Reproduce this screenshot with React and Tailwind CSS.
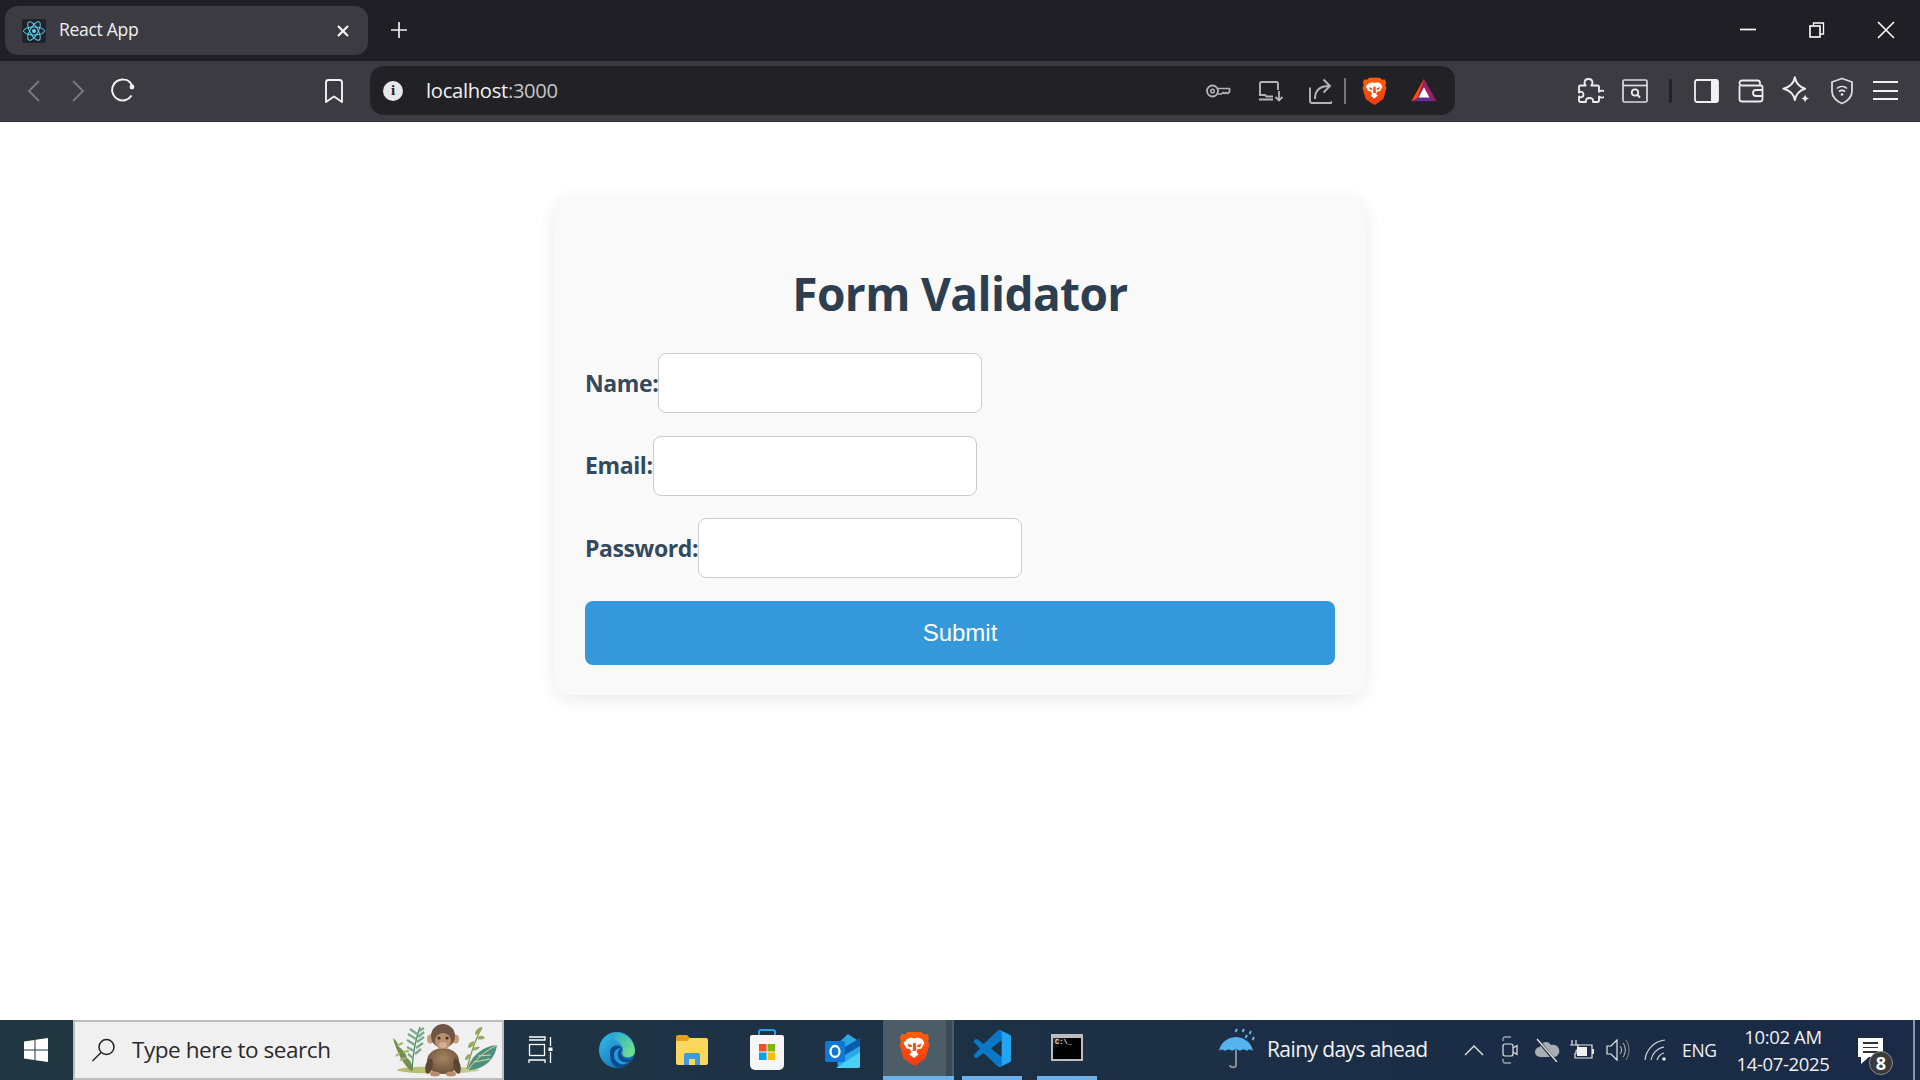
import React from "react";

const Ic = ({ w = 24, h = 24, vb, children, className = "" }) => (
  <svg width={w} height={h} viewBox={vb || `0 0 ${w} ${h}`} fill="none" className={"shrink-0 " + className}>
    {children}
  </svg>
);

const ReactLogo = () => (
  <div className="w-[24px] h-[24px] bg-[#20232a] rounded-[2px] flex items-center justify-center">
    <Ic w={22} h={22} vb="-11.5 -10.2 23 20.4">
      <circle r="2.05" fill="#61dafb" />
      <g stroke="#61dafb" strokeWidth="1">
        <ellipse rx="11" ry="4.2" />
        <ellipse rx="11" ry="4.2" transform="rotate(60)" />
        <ellipse rx="11" ry="4.2" transform="rotate(120)" />
      </g>
    </Ic>
  </div>
);

const BraveLion = ({ w = 31, h = 35, id = "bl" }) => (
  <Ic w={w} h={h} vb="0 0 31 35">
    <defs>
      <linearGradient id={id} x1="0" y1="0" x2="0" y2="1">
        <stop offset="0" stopColor="#ff5f0a" />
        <stop offset="1" stopColor="#f03a14" />
      </linearGradient>
    </defs>
    <path d="M9 1h13l3 2.500 3.500-.5 1.500 4-1 3.500 1.500 3-4 14-7 5-4 2.500-4-2.500-7-5-4-14 1.500-3-1-3.500 1.500-4 3.500.5z" fill={`url(#${id})`} />
    <path d="M8 8l4-1.500 3.500 1 3.500-1 4 1.500 2.500 4-3 5.500-3.500.5-1.500 3 2 2.500-4.500 3.500-4.500-3.500 2-2.500-1.500-3-3.500-.5-3-5.500z" fill="#fff" />
    <path d="M8.500 12.500l4 1.500.5 2h-3.200zM22.500 12.500l-4 1.500-.5 2h3.200zM14.200 12h2.600l.6 8h-3.800z" fill="#f9500f" />
  </Ic>
);

const Toolbar = () => (
  <div className="h-[61px] bg-[#3b3b41] border-b border-[#2f2f35] flex items-center shrink-0">
    <Ic w={20} h={26} className="ml-[24px] -mt-[1px]">
      <path d="M15 3L5 13l10 10" stroke="#77777c" strokeWidth="2" />
    </Ic>
    <Ic w={20} h={26} className="ml-[24px] -mt-[1px]">
      <path d="M5 3l10 10L5 23" stroke="#77777c" strokeWidth="2" />
    </Ic>
    <Ic w={26} h={28} className="ml-[22px] -mt-[2px]">
      <path d="M21.5 19.5A10.5 10.5 0 1 1 14 3.5c3.6 0 6 1.8 8 6" stroke="#f2f2f3" strokeWidth="2" />
      <circle cx="22" cy="11" r="2.4" fill="#f2f2f3" />
    </Ic>
    <Ic w={20} h={26} className="ml-[188px]">
      <path d="M2 4.500A2.500 2.500 0 0 1 4.500 2h11A2.500 2.500 0 0 1 18 4.500V24l-8-5.500L2 24z" stroke="#f2f2f3" strokeWidth="1.900" strokeLinejoin="round" />
    </Ic>
    <div className="ml-[26px] w-[1085px] h-[49px] -mt-[1px] shrink-0 rounded-[14px] bg-[#222226] flex items-center">
      <div className="ml-[13px] w-[20px] h-[20px] shrink-0 rounded-full bg-[#e8e8ea] flex items-center justify-center text-[#222226] text-[15px] font-bold leading-none font-['Liberation_Serif',serif]">i</div>
      <span className="ml-[23px] text-[20.200px] text-[#f0f0f2] font-['Open_Sans',sans-serif] tracking-[-0.3px] w-[130px] shrink-0">localhost<span className="text-[#c4c4c8]">:3000</span></span>
      <Ic w={26} h={20} className="ml-[649px]">
        <circle cx="7.500" cy="10" r="5.500" stroke="#b5b5b9" strokeWidth="1.800" />
        <circle cx="7.500" cy="10" r="1.800" stroke="#b5b5b9" strokeWidth="1.500" />
        <path d="M13 7.500h11.500v3.500l-2 1.500-1.500-1-1.500 1-1.500-1-1.500 1.500H13" stroke="#b5b5b9" strokeWidth="1.700" strokeLinejoin="round" />
      </Ic>
      <Ic w={26} h={22} className="ml-[26px]">
        <path d="M3 15V3.500A1.500 1.500 0 0 1 4.500 2h15A1.500 1.500 0 0 1 21 3.500V10M2 19.500h14M2 15h6l1.500 1.500H16" stroke="#b5b5b9" strokeWidth="1.900" />
        <path d="M22 11v9M18.500 17l3.500 3.500 3.500-3.500" stroke="#b5b5b9" strokeWidth="1.800" />
      </Ic>
      <Ic w={24} h={28} className="ml-[25px]">
        <path d="M2 10.500V24a2 2 0 0 0 2 2h18a2 2 0 0 0 2-2" stroke="#b5b5b9" strokeWidth="1.900" />
        <path d="M7 22c0-9 5-13 14-13M15.500 2.500L22 9l-6.500 6.500" stroke="#b5b5b9" strokeWidth="1.900" />
      </Ic>
      <div className="ml-[12px] w-[2px] h-[26px] bg-[#77777b]" />
      <div className="ml-[16px]"><BraveLion w={25} h={28} id="bl1" /></div>
      <Ic w={28} h={25} vb="0 0 32 30" className="ml-[23px]">
        <path d="M16 1L1 28l15-4 15 4z" fill="#9e1f63" />
        <path d="M16 1L1 28l7-3.500z" fill="#ff5000" />
        <path d="M1 28l15-8 15 8z" fill="#662d91" />
        <path d="M16 11l6.500 12.500h-13z" fill="#fff" />
      </Ic>
    </div>
    <Ic w={28} h={28} className="ml-[121px] -mt-[1px]">
      <path d="M5 8.500h5.200c-.8-1-1.200-1.900-1.200-3A3.900 3.900 0 0 1 13 2a3.900 3.900 0 0 1 4 3.500c0 1.100-.4 2-1.200 3H22a1.500 1.500 0 0 1 1.500 1.500v4.800c1-.8 1.900-1.200 3-1.200a3.500 3.500 0 0 1 0 7c-1.100 0-2-.4-3-1.200v4.100A1.500 1.500 0 0 1 22 25h-4.500c.5-3-1-4-3.500-4s-4 1-3.500 4H5a1.500 1.500 0 0 1-1.500-1.500v-4c2 1.500 4.500.5 4.500-2s-2.500-3.500-4.500-2V10A1.500 1.500 0 0 1 5 8.500z" stroke="#ececee" strokeWidth="1.900" strokeLinejoin="round" transform="translate(-.5 0)" />
    </Ic>
    <Ic w={26} h={24} className="ml-[18px] -mt-[1px]">
      <rect x="1" y="1" width="24" height="22" rx="1.500" stroke="#dcdcde" strokeWidth="1.700" />
      <path d="M1 6.500h24" stroke="#dcdcde" strokeWidth="1.700" />
      <circle cx="13" cy="13.500" r="3.200" stroke="#ececee" strokeWidth="1.800" />
      <path d="M15.500 16l2.500 2.500" stroke="#ececee" strokeWidth="2" />
    </Ic>
    <div className="ml-[21px] w-[3px] h-[24px] -mt-[1px] bg-[#222226] rounded-full" />
    <Ic w={25} h={24} className="ml-[22px] -mt-[1px]">
      <rect x="1" y="1" width="23" height="22" rx="2" stroke="#f1f1f3" strokeWidth="1.800" />
      <path d="M17 1h5a2 2 0 0 1 2 2v18a2 2 0 0 1-2 2h-5z" fill="#f1f1f3" />
    </Ic>
    <Ic w={26} h={24} className="ml-[19px] -mt-[1px]">
      <path d="M1.500 6.500V20A2.500 2.500 0 0 0 4 22.500h18a2.500 2.500 0 0 0 2.500-2.500V8A1.500 1.500 0 0 0 23 6.500H4A2.500 2.500 0 0 1 1.500 4 2.500 2.500 0 0 1 4 1.500h15.500A2.500 2.500 0 0 1 22 4v2.500" stroke="#ececee" strokeWidth="1.800" />
      <path d="M24.500 11H18a3 3 0 0 0 0 6h6.500" stroke="#ececee" strokeWidth="1.800" />
    </Ic>
    <Ic w={30} h={32} vb="0 0 26 28" className="ml-[17px] -mt-[1px]">
      <path d="M12 2c1 5.500 4 8.500 9 10-5 1.500-8 4.500-9 10-1-5.500-4-8.500-10-10 6-1.500 9-4.500 10-10z" stroke="#ececee" strokeWidth="1.700" strokeLinejoin="round" />
      <path d="M21 17c.4 2 1.500 3.100 3.500 3.500-2 .4-3.100 1.500-3.500 3.500-.4-2-1.500-3.100-3.500-3.500 2-.4 3.100-1.500 3.500-3.500z" fill="#ececee" />
    </Ic>
    <Ic w={24} h={28} className="ml-[19px] -mt-[1px]">
      <path d="M12 1.500l10 3.500v9.500c0 5.500-5 10-10 12-5-2-10-6.500-10-12V5z" stroke="#dcdcde" strokeWidth="1.800" strokeLinejoin="round" />
      <path d="M7 11.500c3-2.700 7-2.700 10 0M9 14.500c2-1.500 4-1.500 6 0" stroke="#ececee" strokeWidth="1.600" />
      <circle cx="12" cy="17.500" r="1.300" fill="#ececee" />
    </Ic>
    <div className="ml-[19px] -mt-[1px] w-[25px] flex flex-col gap-[6.500px]">
      <div className="h-[2px] bg-[#f1f1f3]" />
      <div className="h-[2px] bg-[#f1f1f3]" />
      <div className="h-[2px] bg-[#f1f1f3]" />
    </div>
  </div>
);

const Row = ({ label, w }) => (
  <div className="flex items-center h-[60px] mb-[22.5px]">
    <label className={"font-bold text-[23px] text-[#34495e] font-['Open_Sans',sans-serif] tracking-[-0.4px] whitespace-nowrap " + w}>{label}</label>
    <div className="w-[324px] h-[60px] bg-white border border-[#cccccc] rounded-[8px]" />
  </div>
);

const Monkey = () => (
  <Ic w={108} h={56} vb="0 2 108 56">
    <defs>
      <linearGradient id="gnd" x1="0" y1="0" x2="1" y2="0">
        <stop offset="0" stopColor="#b7b866" />
        <stop offset="1" stopColor="#c7cf96" />
      </linearGradient>
      <radialGradient id="fur" cx="0.5" cy="0.4" r="0.7">
        <stop offset="0" stopColor="#a58460" />
        <stop offset="1" stopColor="#634a38" />
      </radialGradient>
    </defs>
    <ellipse cx="46" cy="50" rx="41" ry="3.500" fill="url(#gnd)" />
    <path d="M20 50C21 32 24 18 28 7" stroke="#4f8a6c" strokeWidth="1.300" />
    <path d="M25 14l-7-5M27 11l5-3M24 19l-8-5M26 17l6-5M23 25l-8-5M25 22l7-5M22 31l-7-4M24 28l7-5M21 38l-5-4M23 34l6-5" stroke="#7cab8b" strokeWidth="2.300" />
    <path d="M1 18c3 2 5 5 5 8 4 3 8 7 9 12 3 2 5 5 6 12l-2 1C11 44 5 33 1 18z" fill="#738f4f" />
    <path d="M11 32l6-1M6 25l5-2M14 38l-6 2M8 33l-4 3" stroke="#a3b56b" strokeWidth="2" />
    <path d="M75 49C78 36 83 20 90 7" stroke="#7c9a50" strokeWidth="1.300" />
    <path d="M90 7c-5 1-7 4-7 8 4-1 7-3 7-8zM85 18c2 2 5 2 8 0-2-3-5-3-8 0zM82 21c-4 1-6 3-6 7 4 0 6-3 6-7zM80 30c3 1 6 0 8-3-4-1-6 0-8 3zM78 34c-3 0-5 3-5 6 3 0 5-2 5-6z" fill="#93a95c" />
    <path d="M76 50c1-12 14-24 29-25-2 15-14 25-29 25z" fill="#4f917f" />
    <path d="M76 50c7-10 17-19 29-25M82 42l16-3M86 36l13-1" stroke="#d9d7a8" strokeWidth="1" />
    <ellipse cx="51" cy="41" rx="16" ry="13" fill="url(#fur)" />
    <ellipse cx="37" cy="46" rx="3.500" ry="8" fill="#5f4634" transform="rotate(12 37 46)" />
    <ellipse cx="65" cy="46" rx="3.500" ry="8" fill="#5f4634" transform="rotate(-12 65 46)" />
    <ellipse cx="38.500" cy="19" rx="3.500" ry="4.500" fill="#c99a7c" />
    <ellipse cx="63.500" cy="19" rx="3.500" ry="4.500" fill="#c99a7c" />
    <ellipse cx="51" cy="16" rx="12" ry="12" fill="#6e5548" />
    <ellipse cx="51" cy="21" rx="8" ry="8" fill="#b88f6f" />
    <circle cx="47" cy="18" r="1.600" fill="#4a2f15" />
    <circle cx="55" cy="18" r="1.600" fill="#4a2f15" />
    <ellipse cx="51" cy="25" rx="4" ry="3" fill="#d8ae90" />
    <ellipse cx="43" cy="54" rx="5" ry="2.500" fill="#b98c70" />
    <ellipse cx="59" cy="54" rx="5" ry="2.500" fill="#b98c70" />
  </Ic>
);

const Edge = () => (
  <Ic w={38} h={38} vb="0 0 38 38">
    <defs>
      <linearGradient id="e1" x1="0" y1="0" x2="1" y2="1"><stop offset="0" stopColor="#35c1f1" /><stop offset="1" stopColor="#0c59a4" /></linearGradient>
      <linearGradient id="e2" x1="0" y1="0" x2="1" y2="0.6"><stop offset="0" stopColor="#1b9de2" /><stop offset="1" stopColor="#6fe08a" /></linearGradient>
    </defs>
    <circle cx="19" cy="19" r="18" fill="url(#e1)" />
    <path d="M10 4c10-6 26 0 27 16 0 5-5 7-9 6-4-1-4-4-3-6 1-6-8-12-15-16z" fill="url(#e2)" />
    <path d="M12 21c0-6 8-9 12-4-1 3-2 6 1 9 2 2 6 3 9 2-3 7-11 10-16 8-5-3-6-9-6-15z" fill="#114a8b" />
    <path d="M16 24c0-4 3-7 7-7-4 3-4 9-1 12 2 2 6 3 9 2-3 2-7 3-9 2-4-2-6-5-6-9z" fill="#1b9de2" />
  </Ic>
);

const Explorer = () => (
  <Ic w={34} h={32} vb="0 0 34 32">
    <path d="M1 3a2 2 0 0 1 2-2h9l3 3h-14z" fill="#e0a21a" />
    <rect x="1" y="4" width="32" height="27" rx="2" fill="#fbd760" />
    <path d="M1 4h14l-3 3H1z" fill="#e0a21a" />
    <path d="M9 31V21a2 2 0 0 1 2-2h12a2 2 0 0 1 2 2v10h-5v-6h-6v6z" fill="#3f9ae0" />
  </Ic>
);

const Store = () => (
  <Ic w={36} h={42} vb="0 0 36 42">
    <path d="M10 7V3a2 2 0 0 1 2-2h12a2 2 0 0 1 2 2v4" stroke="#2aa1e6" strokeWidth="2" />
    <path d="M1 8a2 2 0 0 1 2-2h30a2 2 0 0 1 2 2v28a5 5 0 0 1-5 5H6a5 5 0 0 1-5-5z" fill="#f6f6f6" />
    <rect x="10" y="15" width="7.500" height="7.500" fill="#f25022" />
    <rect x="18.500" y="15" width="7.500" height="7.500" fill="#7fba00" />
    <rect x="10" y="23.500" width="7.500" height="7.500" fill="#00a4ef" />
    <rect x="18.500" y="23.500" width="7.500" height="7.500" fill="#ffb900" />
  </Ic>
);

const Outlook = () => (
  <Ic w={38} h={38} vb="0 0 38 38">
    <path d="M12 14L24 3l12 8v24a2 2 0 0 1-2 2H14z" fill="#29a7e6" />
    <path d="M14 20L36 7v8L14 28z" fill="#0a5da8" />
    <path d="M12 37l24-16v14a2 2 0 0 1-2 2z" fill="#4bd0f5" />
    <rect x="1" y="10" width="20" height="21" rx="2" fill="#0f78d4" />
    <ellipse cx="11" cy="20.500" rx="4.500" ry="5.500" stroke="#fff" strokeWidth="2.300" />
  </Ic>
);

const VSCode = () => (
  <Ic w={37} h={37} vb="0 0 100 100">
    <path fillRule="evenodd" d="M71 99l25-12a6 6 0 0 0 4-6V19a6 6 0 0 0-4-6L71 1a6 6 0 0 0-7 1L26 38 9 25a4 4 0 0 0-5 0l-3 3a4 4 0 0 0 0 6l15 16L1 66a4 4 0 0 0 0 6l3 3a4 4 0 0 0 5 0l17-13 38 36a6 6 0 0 0 7 1zM75 27L46 50l29 23z" fill="#0a78c6" />
    <path d="M66 1.500a6 6 0 0 1 5-.5l25 12a6 6 0 0 1 4 6v62a6 6 0 0 1-4 6l-25 12a6 6 0 0 1-5-.5c3 1 9 0 9-6V7c0-6-6-6.500-9-5.500z" fill="#22a6f2" />
  </Ic>
);

const Term = () => (
  <div className="w-[32px] h-[27px] -mt-[2px] bg-gradient-to-br from-[#3a3a3a] via-black to-black border-[2px] border-[#bdbdbd] border-t-[4px] flex items-start overflow-hidden">
    <span className="text-[7px] leading-[9px] font-bold text-[#e0e0e0] font-['Liberation_Mono',monospace] ml-[2px] whitespace-nowrap">C:\_</span>
  </div>
);

const Taskbar = () => (
  <div className="h-[60px] shrink-0 flex items-center bg-gradient-to-r from-[#203742] to-[#1a2a47] text-white">
    <Ic w={24} h={24} vb="0 0 24 24" className="ml-[24px]">
      <path d="M0 3.500L10.500 2v9.500H0zM11.500 1.800L24 0v11.500H11.500zM0 12.500h10.500V22L0 20.500zM11.500 12.500H24V24l-12.500-1.800z" fill="#fff" />
    </Ic>
    <div className="ml-[25px] w-[431px] h-[60px] shrink-0 bg-[#f0f0f0] border-[2px] border-[#bdbdbd] flex items-center">
      <Ic w={26} h={26} className="ml-[16px]">
        <circle cx="15.500" cy="10" r="7.500" stroke="#222" strokeWidth="1.500" />
        <path d="M10 15.500L1.500 24" stroke="#222" strokeWidth="1.500" />
      </Ic>
      <span className="ml-[15px] text-[#2a2a2a] text-[22.5px] font-['Open_Sans',sans-serif] tracking-[-0.45px] w-[260px] shrink-0 whitespace-nowrap">Type here to search</span>
      <Monkey />
    </div>
    <Ic w={26} h={28} className="ml-[23px]">
      <path d="M2 1h16v3H2M2 27v-3h16v3" stroke="#fff" strokeWidth="1.300" />
      <rect x="2.500" y="8.500" width="15" height="11" stroke="#fff" strokeWidth="1.300" />
      <path d="M23.500 1v9M23.500 16v11" stroke="#fff" strokeWidth="1.300" />
      <rect x="21.500" y="11.500" width="4" height="3.500" fill="#fff" />
    </Ic>
    <div className="ml-[45px]"><Edge /></div>
    <div className="ml-[39px]"><Explorer /></div>
    <div className="ml-[40px]"><Store /></div>
    <div className="ml-[39px]"><Outlook /></div>
    <div className="ml-[21px] w-[63px] h-[60px] bg-[#4d5d67] border-b-[4px] border-[#6fb1e8] flex items-center justify-center"><BraveLion w={31} h={35} id="bl2" /></div>
    <div className="w-[6px] h-[60px] bg-[#3a4a55] border-b-[4px] border-[#6fb1e8]" />
    <div className="w-[2px] h-[60px] bg-[#4d5d67] border-b-[4px] border-[#6fb1e8]" />
    <div className="ml-[8px] w-[60px] h-[60px] border-b-[4px] border-[#6fb1e8] flex items-center justify-center"><VSCode /></div>
    <div className="ml-[15px] w-[60px] h-[60px] border-b-[4px] border-[#6fb1e8] flex items-center justify-center"><Term /></div>
    <Ic w={40} h={44} vb="0 0 40 44" className="ml-[120px]">
      <path d="M2 23C4 12 14 9 19 9s15 3 17 14c-2-2-5-2-6 0-2-2-5-2-7 0-2-2-6-2-8 0-2-2-5-2-7 0-2-2-4-2-6 0z" fill="#55b3ee" />
      <path d="M19 22v15c0 3-6 3-6 0" stroke="#8d8d92" strokeWidth="2" />
      <path d="M20 1l-1.500 3M27 1l-1.500 3M34 3l-1.500 3M30 7l-1.500 3M37 9l-1.500 3" stroke="#5fb6f0" strokeWidth="2" />
    </Ic>
    <span className="ml-[10px] text-[21px] font-['Open_Sans',sans-serif] tracking-[-0.6px] w-[177px] shrink-0 whitespace-nowrap text-[#f2f2f2]">Rainy days ahead</span>
    <Ic w={20} h={12} className="ml-[20px]"><path d="M1 11l9-9 9 9" stroke="#e6e6e6" strokeWidth="1.400" /></Ic>
    <Ic w={18} h={30} className="ml-[17px]">
      <path d="M2 6V3.500Q2 2 4 2h6M2 24v2.500Q2 28 4 28h6" stroke="#ddd" strokeWidth="1" />
      <rect x="2" y="9" width="10" height="12" rx="2" stroke="#e6e6e6" strokeWidth="1.200" />
      <path d="M12 13l4-2.500v9L12 17" stroke="#e6e6e6" strokeWidth="1.200" />
    </Ic>
    <Ic w={26} h={24} className="ml-[15px]">
      <path d="M6 19a5 5 0 0 1 0-10 6 6 0 0 1 11-2 5 5 0 0 1 4 12z" fill="#a8aeb4" />
      <path d="M3 1l19 23" stroke="#20303f" strokeWidth="3" />
      <path d="M3 1l20 23" stroke="#e6e6e6" strokeWidth="1.300" />
    </Ic>
    <Ic w={26} h={22} className="ml-[9px]">
      <path d="M7 6V1M3 6V1M1 6h8v4l-2 2v3" stroke="#e6e6e6" strokeWidth="1.200" />
      <path d="M8 6h15v13H6v-5" stroke="#e6e6e6" strokeWidth="1.200" />
      <rect x="8" y="8" width="10" height="9" fill="#f0f0f0" />
      <rect x="23" y="10" width="2" height="5" fill="#e6e6e6" />
    </Ic>
    <Ic w={24} h={24} className="ml-[11px]">
      <path d="M1 8h4l6-6v20l-6-6H1z" stroke="#e6e6e6" strokeWidth="1.200" />
      <path d="M14 8c2 2 2 6 0 8M17 5c3 4 3 10 0 14" stroke="#c8c8c8" strokeWidth="1" />
      <path d="M20 2c4 6 4 14 0 20" stroke="#888" strokeWidth="1" />
    </Ic>
    <Ic w={24} h={24} className="ml-[14px]">
      <path d="M1 22C2 12 10 3 21 2M7 22c1-6 6-12 13-13M13 22c1-3 3-6 7-7" stroke="#d8d8d8" strokeWidth="1.200" />
      <circle cx="20" cy="21" r="1.800" fill="#e6e6e6" />
    </Ic>
    <span className="ml-[14px] text-[17.5px] font-['Open_Sans',sans-serif] tracking-[-0.3px] w-[36px] shrink-0 text-[#f0f0f0]">ENG</span>
    <div className="ml-[15px] w-[100px] shrink-0 flex flex-col items-center text-[18.5px] leading-[27px] font-['Open_Sans',sans-serif] tracking-[-0.35px] text-[#f0f0f0] whitespace-nowrap">
      <span>10:02 AM</span>
      <span>14-07-2025</span>
    </div>
    <div className="ml-[25px] w-[36px] h-[40px] shrink-0 relative">
      <div className="absolute left-0 top-[8px] w-[25px] h-[19px] bg-white flex flex-col items-center justify-center gap-[3px]">
        <div className="w-[15px] h-[1.500px] bg-[#333]" />
        <div className="w-[15px] h-[1.500px] bg-[#333]" />
        <div className="w-[15px] h-[1.500px] bg-[#333]" />
      </div>
      <div className="absolute left-[3px] top-[26px] w-0 h-0 border-l-[9px] border-l-white border-b-[8px] border-b-transparent" />
      <div className="absolute left-[11px] top-[21px] w-[24px] h-[24px] rounded-full bg-[#3a3a3a] border border-[#8c8c8c] flex items-center justify-center text-[18px] font-bold font-['Open_Sans',sans-serif]">8</div>
    </div>
    <div className="ml-auto mr-[5px] w-[2px] h-[60px] bg-[#8c95a3]" />
  </div>
);

export default function App() {
  return (
    <div className="h-screen w-full flex flex-col overflow-hidden bg-white">
      <div className="h-[61px] bg-[#1f1f25] flex items-start shrink-0 text-white">
        <div className="ml-[5px] mt-[6px] w-[363px] h-[49px] shrink-0 rounded-[13px] bg-[#3b3b41] flex items-center">
          <div className="ml-[17px]"><ReactLogo /></div>
          <span className="ml-[13px] -mt-[2px] text-[17.5px] font-['Open_Sans',sans-serif] tracking-[-0.3px] text-[#f0f0f2] w-[265px] shrink-0">React App</span>
          <Ic w={14} h={14} className="ml-[12px]"><path d="M2 2l10 10M12 2L2 12" stroke="#f4f4f5" strokeWidth="2.200" /></Ic>
        </div>
        <Ic w={16} h={16} className="ml-[23px] mt-[22px]"><path d="M8 0v16M0 8h16" stroke="#f0f0f2" strokeWidth="1.700" /></Ic>
        <Ic w={16} h={3} className="ml-[1333px] mt-[28px]"><path d="M0 1.500h16" stroke="#fff" strokeWidth="1.700" /></Ic>
        <Ic w={16} h={16} className="ml-[53px] mt-[22px]">
          <rect x="1" y="4" width="10" height="11" stroke="#fff" strokeWidth="1.600" />
          <path d="M4.500 4V1h10v11h-3.500" stroke="#fff" strokeWidth="1.300" />
        </Ic>
        <Ic w={18} h={18} className="ml-[52px] mt-[21px]"><path d="M1 1l16 16M17 1L1 17" stroke="#fff" strokeWidth="1.600" /></Ic>
      </div>
      <Toolbar />
      <main className="flex-1 bg-white pt-[75px] flex justify-center min-h-0">
        <form className="w-[810px] h-[498px] bg-[#f9f9f9] rounded-[15px] shadow-[0_4px_18px_rgba(0,0,0,0.09)] px-[30px] pt-[30px]">
          <h2 className="h-[126px] pt-[34px] text-center font-bold text-[46px] leading-[64px] text-[#2c3e50] font-['Open_Sans',sans-serif] tracking-[-0.6px]">Form Validator</h2>
          <Row label="Name:" w="w-[73px]" />
          <Row label="Email:" w="w-[68px]" />
          <Row label="Password:" w="w-[113px]" />
          <button type="button" className="block w-full h-[64px] rounded-[8px] bg-[#3498db] text-white text-[24px] font-['Liberation_Sans',sans-serif]">Submit</button>
        </form>
      </main>
      <Taskbar />
    </div>
  );
}
